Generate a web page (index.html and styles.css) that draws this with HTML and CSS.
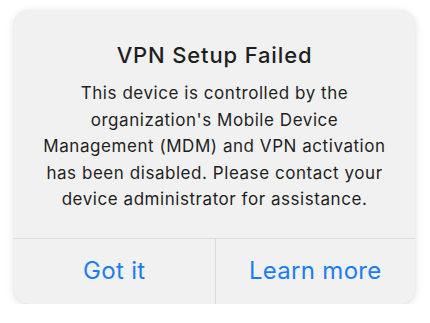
FILE: index.html
```html
<!DOCTYPE html>
<html lang="en">
<head>
<meta charset="utf-8">
<title>VPN Setup Failed</title>
<link rel="stylesheet" href="styles.css">
</head>
<body>
<div class="alert" role="alertdialog" aria-labelledby="alert-title">
  <div class="alert-content">
    <h1 class="alert-title" id="alert-title">VPN Setup Failed</h1>
    <p class="alert-message">This device is controlled by the<br>organization's Mobile Device<br>Management (MDM) and VPN activation<br>has been disabled. Please contact your<br>device administrator for assistance.</p>
  </div>
  <div class="alert-actions">
    <button class="alert-button" type="button">Got it</button>
    <button class="alert-button" type="button">Learn more</button>
  </div>
</div>
</body>
</html>
```
FILE: styles.css
```css
* { box-sizing: border-box; }
html, body { margin: 0; padding: 0; background: #ffffff; }
body {
  font-family: Inter, "Liberation Sans", Arial, sans-serif;
  padding-top: 10px;
}
.alert {
  width: 401px;
  margin: 0 0 0 14px;
  background: #f1f1f1;
  border-radius: 15px;
  box-shadow: 0 2px 8px rgba(0, 0, 0, 0.12), 0 0 2px rgba(0, 0, 0, 0.06);
  overflow: hidden;
}
.alert-content {
  padding: 31px 4px 25px;
  text-align: center;
}
.alert-title {
  margin: 0;
  font-size: 22px;
  line-height: 28px;
  font-weight: 500;
  letter-spacing: 0.85px;
  color: #1f1f1f;
}
.alert-message {
  margin: 11px 0 0;
  font-size: 17px;
  line-height: 26.5px;
  letter-spacing: 0.55px;
  color: #1f1f1f;
}
.alert-actions {
  display: grid;
  grid-template-columns: 1fr 1fr;
  border-top: 1px solid #dcdcdc;
  height: 66px;
}
.alert-button {
  appearance: none;
  border: 0;
  background: transparent;
  font-family: inherit;
  font-size: 24px;
  letter-spacing: 0.3px;
  color: #1a7ef2;
  padding: 0 0 2px;
  cursor: pointer;
}
.alert-button + .alert-button {
  border-left: 1px solid #dcdcdc;
}
```
